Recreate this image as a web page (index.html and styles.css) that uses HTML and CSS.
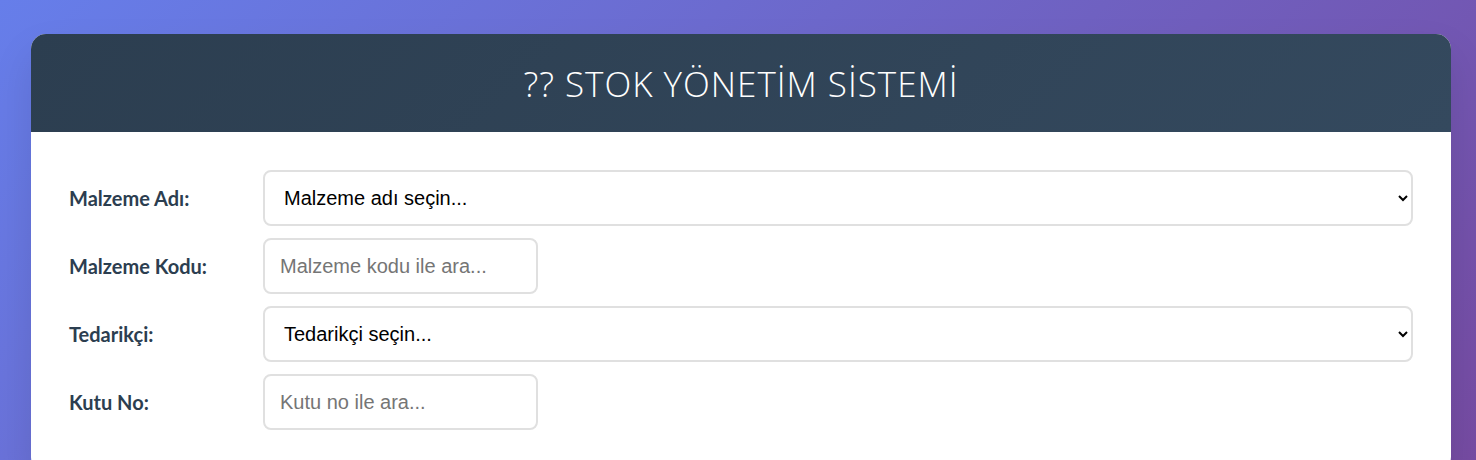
FILE: index.html
```html
<!DOCTYPE html>
<html lang="tr">
<head>
  <meta charset="UTF-8">
  <title>Stok Yönetim Sistemi</title>
  <link rel="stylesheet" href="styles.css">
</head>
<body>

  <div class="container">
    <!-- Baslik -->
    <div class="header">
      <h1>?? STOK YÖNETİM SİSTEMİ</h1>
    </div>

    <!-- Arama formu -->
    <div class="search-section">
      <div class="form-row">
        <label for="malzemeAdi">Malzeme Adı:</label>
        <select id="malzemeAdi" class="wide">
          <option value="">Malzeme adı seçin...</option>
        </select>
      </div>
      <div class="form-row">
        <label for="malzemeKodu">Malzeme Kodu:</label>
        <input type="text" id="malzemeKodu" placeholder="Malzeme kodu ile ara...">
      </div>
      <div class="form-row">
        <label for="tedarikci">Tedarikçi:</label>
        <select id="tedarikci" class="wide">
          <option value="">Tedarikçi seçin...</option>
        </select>
      </div>
      <div class="form-row">
        <label for="kutuNo">Kutu No:</label>
        <input type="text" id="kutuNo" placeholder="Kutu no ile ara...">
      </div>
    </div>
  </div>

</body>
</html>
```

FILE: styles.css
```css
* {
  box-sizing: border-box;
}

body {
  margin: 0;
  padding: 34px 25px 0 31px;
  min-height: 100vh;
  background: linear-gradient(135deg, #667eea 0%, #764ba2 100%);
  font-family: "Open Sans", "Liberation Sans", sans-serif;
  overflow: hidden;
}

.container {
  background: #ffffff;
  border-radius: 15px;
  overflow: hidden;
  box-shadow: 0 20px 40px rgba(0, 0, 0, 0.1);
}

.header {
  background: linear-gradient(135deg, #2c3e50 0%, #34495e 100%);
  color: #ffffff;
  height: 98px;
  display: flex;
  align-items: center;
  justify-content: center;
}

.header h1 {
  margin: 0;
  font-size: 35px;
  font-weight: 300;
  letter-spacing: 1px;
}

.search-section {
  padding: 38px 38px 30px;
}

.form-row {
  display: flex;
  align-items: center;
  margin-bottom: 12px;
}

.form-row label {
  width: 194px;
  flex-shrink: 0;
  font-family: Lato, "Liberation Sans", sans-serif;
  font-weight: 700;
  font-size: 20px;
  color: #2c3e50;
}

.form-row input,
.form-row select {
  height: 56px;
  padding: 0 15px;
  border: 2px solid #e0e0e0;
  border-radius: 8px;
  background: #ffffff;
  font-family: "Liberation Sans", Arial, sans-serif;
  font-size: 20px;
  color: #000000;
}

.form-row input {
  width: 275px;
}

.form-row input::placeholder {
  color: #757575;
}

.form-row select.wide {
  flex: 1;
}
```
